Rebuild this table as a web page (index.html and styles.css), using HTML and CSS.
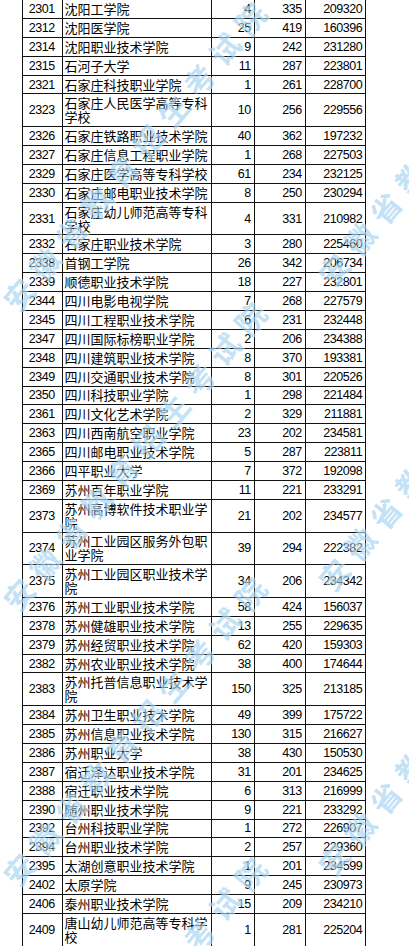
FILE: index.html
```html
<!DOCTYPE html>
<html lang="zh-CN">
<head>
<meta charset="utf-8">
<title>院校投档表</title>
<link rel="stylesheet" href="styles.css">
</head>
<body>
<div class="page">
<table class="grid">
<colgroup><col class="c1"><col class="c2"><col class="c3"><col class="c4"><col class="c5"></colgroup>
<tbody>
<tr><td class="code">2301</td><td class="name">沈阳工学院</td><td class="n">4</td><td class="n">335</td><td class="n">209320</td></tr>
<tr><td class="code">2312</td><td class="name">沈阳医学院</td><td class="n">25</td><td class="n">419</td><td class="n">160396</td></tr>
<tr><td class="code">2314</td><td class="name">沈阳职业技术学院</td><td class="n">9</td><td class="n">242</td><td class="n">231280</td></tr>
<tr><td class="code">2315</td><td class="name">石河子大学</td><td class="n">11</td><td class="n">287</td><td class="n">223801</td></tr>
<tr><td class="code">2321</td><td class="name">石家庄科技职业学院</td><td class="n">1</td><td class="n">261</td><td class="n">228700</td></tr>
<tr class="tall"><td class="code">2323</td><td class="name">石家庄人民医学高等专科学校</td><td class="n">10</td><td class="n">256</td><td class="n">229556</td></tr>
<tr><td class="code">2326</td><td class="name">石家庄铁路职业技术学院</td><td class="n">40</td><td class="n">362</td><td class="n">197232</td></tr>
<tr><td class="code">2327</td><td class="name">石家庄信息工程职业学院</td><td class="n">1</td><td class="n">268</td><td class="n">227503</td></tr>
<tr><td class="code">2329</td><td class="name">石家庄医学高等专科学校</td><td class="n">61</td><td class="n">234</td><td class="n">232125</td></tr>
<tr><td class="code">2330</td><td class="name">石家庄邮电职业技术学院</td><td class="n">8</td><td class="n">250</td><td class="n">230294</td></tr>
<tr class="tall"><td class="code">2331</td><td class="name">石家庄幼儿师范高等专科学校</td><td class="n">4</td><td class="n">331</td><td class="n">210982</td></tr>
<tr><td class="code">2332</td><td class="name">石家庄职业技术学院</td><td class="n">3</td><td class="n">280</td><td class="n">225460</td></tr>
<tr><td class="code">2338</td><td class="name">首钢工学院</td><td class="n">26</td><td class="n">342</td><td class="n">206734</td></tr>
<tr><td class="code">2339</td><td class="name">顺德职业技术学院</td><td class="n">18</td><td class="n">227</td><td class="n">232801</td></tr>
<tr><td class="code">2344</td><td class="name">四川电影电视学院</td><td class="n">7</td><td class="n">268</td><td class="n">227579</td></tr>
<tr><td class="code">2345</td><td class="name">四川工程职业技术学院</td><td class="n">6</td><td class="n">231</td><td class="n">232448</td></tr>
<tr><td class="code">2347</td><td class="name">四川国际标榜职业学院</td><td class="n">2</td><td class="n">206</td><td class="n">234388</td></tr>
<tr><td class="code">2348</td><td class="name">四川建筑职业技术学院</td><td class="n">8</td><td class="n">370</td><td class="n">193381</td></tr>
<tr><td class="code">2349</td><td class="name">四川交通职业技术学院</td><td class="n">8</td><td class="n">301</td><td class="n">220526</td></tr>
<tr><td class="code">2350</td><td class="name">四川科技职业学院</td><td class="n">1</td><td class="n">298</td><td class="n">221484</td></tr>
<tr><td class="code">2361</td><td class="name">四川文化艺术学院</td><td class="n">2</td><td class="n">329</td><td class="n">211881</td></tr>
<tr><td class="code">2363</td><td class="name">四川西南航空职业学院</td><td class="n">23</td><td class="n">202</td><td class="n">234581</td></tr>
<tr><td class="code">2365</td><td class="name">四川邮电职业技术学院</td><td class="n">5</td><td class="n">287</td><td class="n">223811</td></tr>
<tr><td class="code">2366</td><td class="name">四平职业大学</td><td class="n">7</td><td class="n">372</td><td class="n">192098</td></tr>
<tr><td class="code">2369</td><td class="name">苏州百年职业学院</td><td class="n">11</td><td class="n">221</td><td class="n">233291</td></tr>
<tr class="tall"><td class="code">2373</td><td class="name">苏州高博软件技术职业学院</td><td class="n">21</td><td class="n">202</td><td class="n">234577</td></tr>
<tr class="tall"><td class="code">2374</td><td class="name">苏州工业园区服务外包职业学院</td><td class="n">39</td><td class="n">294</td><td class="n">222382</td></tr>
<tr class="tall"><td class="code">2375</td><td class="name">苏州工业园区职业技术学院</td><td class="n">34</td><td class="n">206</td><td class="n">234342</td></tr>
<tr><td class="code">2376</td><td class="name">苏州工业职业技术学院</td><td class="n">58</td><td class="n">424</td><td class="n">156037</td></tr>
<tr><td class="code">2378</td><td class="name">苏州健雄职业技术学院</td><td class="n">13</td><td class="n">255</td><td class="n">229635</td></tr>
<tr><td class="code">2379</td><td class="name">苏州经贸职业技术学院</td><td class="n">62</td><td class="n">420</td><td class="n">159303</td></tr>
<tr><td class="code">2382</td><td class="name">苏州农业职业技术学院</td><td class="n">38</td><td class="n">400</td><td class="n">174644</td></tr>
<tr class="tall"><td class="code">2383</td><td class="name">苏州托普信息职业技术学院</td><td class="n">150</td><td class="n">325</td><td class="n">213185</td></tr>
<tr><td class="code">2384</td><td class="name">苏州卫生职业技术学院</td><td class="n">49</td><td class="n">399</td><td class="n">175722</td></tr>
<tr><td class="code">2385</td><td class="name">苏州信息职业技术学院</td><td class="n">130</td><td class="n">315</td><td class="n">216627</td></tr>
<tr><td class="code">2386</td><td class="name">苏州职业大学</td><td class="n">38</td><td class="n">430</td><td class="n">150530</td></tr>
<tr><td class="code">2387</td><td class="name">宿迁泽达职业技术学院</td><td class="n">31</td><td class="n">201</td><td class="n">234625</td></tr>
<tr><td class="code">2388</td><td class="name">宿迁职业技术学院</td><td class="n">6</td><td class="n">313</td><td class="n">216999</td></tr>
<tr><td class="code">2390</td><td class="name">随州职业技术学院</td><td class="n">9</td><td class="n">221</td><td class="n">233292</td></tr>
<tr><td class="code">2392</td><td class="name">台州科技职业学院</td><td class="n">1</td><td class="n">272</td><td class="n">226907</td></tr>
<tr><td class="code">2394</td><td class="name">台州职业技术学院</td><td class="n">2</td><td class="n">257</td><td class="n">229360</td></tr>
<tr><td class="code">2395</td><td class="name">太湖创意职业技术学院</td><td class="n">1</td><td class="n">201</td><td class="n">234599</td></tr>
<tr><td class="code">2402</td><td class="name">太原学院</td><td class="n">9</td><td class="n">245</td><td class="n">230973</td></tr>
<tr><td class="code">2406</td><td class="name">泰州职业技术学院</td><td class="n">15</td><td class="n">209</td><td class="n">234210</td></tr>
<tr class="tall"><td class="code">2409</td><td class="name">唐山幼儿师范高等专科学校</td><td class="n">1</td><td class="n">281</td><td class="n">225204</td></tr>
</tbody>
</table>
<div class="wm" aria-hidden="true">
<span class="mark m1">安徽省教育招生考试院</span>
<span class="mark m2">安徽省教育招生考试院</span>
<span class="mark m3">安徽省教育招生考试院</span>
<span class="mark m4">安徽省教育招生考试院</span>
<span class="mark m5">安徽省教育招生考试院</span>
<span class="mark m6">安徽省教育招生考试院</span>
<span class="mark m7">安徽省教育招生考试院</span>
</div>
</div>
</body>
</html>
```

FILE: styles.css
```css
html, body {
  margin: 0;
  padding: 0;
  background: #fff;
}
.page {
  position: relative;
  width: 409px;
  height: 946px;
  overflow: hidden;
}
.grid {
  border-collapse: collapse;
  table-layout: fixed;
  width: 344px;
  margin: -1px 0 0 22px;
  color: #000;
}
.c1 { width: 39.5px; }
.c2 { width: 149.3px; }
.c3 { width: 43px; }
.c4 { width: 51px; }
.c5 { width: 60.4px; }
.grid tr { height: 18.9px; }
.grid tr.tall { height: 32.7px; }
.grid td {
  border: 1px solid #111;
  padding: 0 3px 0 2px;
  line-height: 14px;
  vertical-align: middle;
}
.code, .n {
  font-family: "Liberation Sans", Arial, sans-serif;
  font-size: 12.5px;
  letter-spacing: -0.45px;
}
.code { text-align: center; padding: 0; }
.n { text-align: right; }
.name {
  font-family: "Noto Sans CJK SC", "Noto Sans CJK JP", sans-serif;
  font-size: 13px;
  font-weight: 400;
  padding-left: 2px;
  padding-right: 1px;
}
.wm {
  position: absolute;
  inset: 0;
  pointer-events: none;
}
.mark {
  position: absolute;
  transform-origin: 0 100%;
  transform: rotate(-50deg);
  white-space: nowrap;
  font-family: "Noto Sans CJK SC", sans-serif;
  font-size: 30px;
  line-height: 30px;
  font-weight: 700;
  letter-spacing: 10px;
  color: rgba(100, 180, 230, 0.4);
  text-shadow: 1px 1px 0 rgba(255, 255, 255, 0.5);
}
.m1 { left: 20px; top: 285px; }
.m2 { left: 20px; top: 585px; }
.m3 { left: 20px; top: 860px; }
.m4 { left: 20px; top: 1140px; }
.m5 { left: 335px; top: 260px; }
.m6 { left: 335px; top: 565px; }
.m7 { left: 335px; top: 850px; }
```
